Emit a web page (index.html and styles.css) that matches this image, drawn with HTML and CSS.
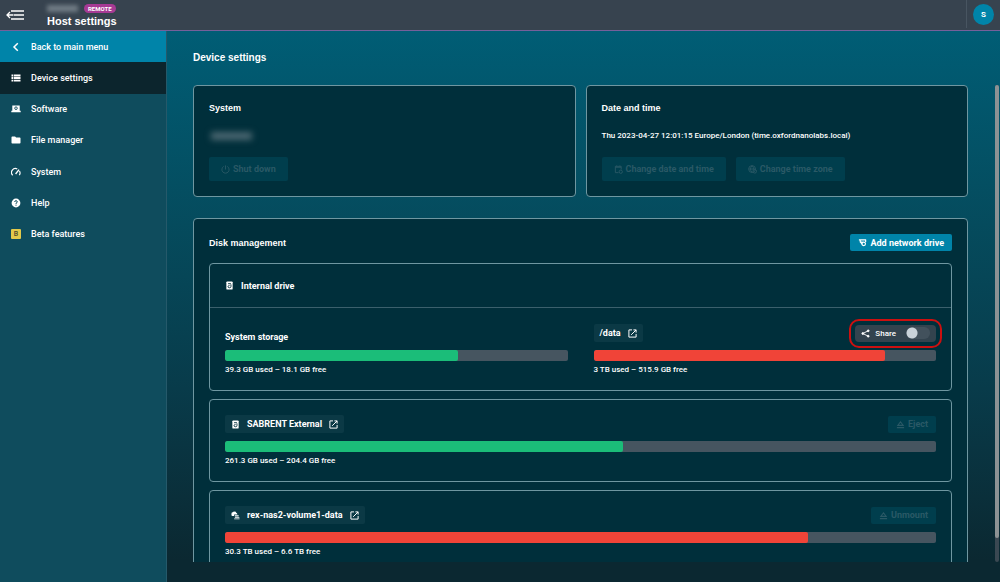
FILE: index.html
```html
<!doctype html>
<html lang="en">
<head>
    <meta charset="utf-8">
    <title>Host settings</title>
    <link rel="stylesheet" href="styles.css">
</head>
<body>
<header class="topbar">
    <button type="button" class="menu-toggle" aria-label="Collapse menu">
        <svg width="18" height="10" viewBox="0 0 18 10" fill="none" stroke="#fff" stroke-width="1.3">
            <path d="M5 1h13M7.500 5H18M5 9h13M7 5H1M4 2L1 5l3 3"/>
        </svg>
    </button>
    <div class="host">
        <div class="host-top">
            <span class="host-name"></span>
            <span class="badge">REMOTE</span>
        </div>
        <h1>Host settings</h1>
    </div>
    <div class="account">
        <button type="button" class="avatar">S</button>
    </div>
</header>

<div class="page">
    <nav class="sidebar">
        <a href="#" class="back">
            <svg class="icon" viewBox="0 0 10 10" fill="none" stroke="#fff" stroke-width="1.5"><path d="M6.800 1.200L3 5l3.800 3.800"/></svg>
            Back to main menu
        </a>
        <a href="#" class="active">
            <svg class="icon" viewBox="0 0 10 10" fill="#fff"><path d="M.5 1.500h1.700v1.900H.5zM2.800 1.500h6.700v1.900H2.800zM.5 4.100h1.700V6H.5zM2.800 4.100h6.700V6H2.800zM.5 6.700h1.700v1.900H.5zM2.800 6.700h6.700v1.900H2.800z"/></svg>
            Device settings
        </a>
        <a href="#">
            <svg class="icon" viewBox="0 0 10 10"><path fill="#fff" d="M1.300 1.500h7.400v5.300h1v1.500H.3V6.800h1z"/><circle cx="5" cy="4.200" r="1.300" fill="none" stroke="#0f4c5d" stroke-width=".9"/></svg>
            Software
        </a>
        <a href="#">
            <svg class="icon" viewBox="0 0 10 10" fill="#fff"><path d="M1.300 1.500h2.800l1 1h3.600q.8 0 .8.800v4.500q0 .8-.8.800H1.300q-.8 0-.8-.8V2.300q0-.8.8-.8z"/></svg>
            File manager
        </a>
        <a href="#">
            <svg class="icon" viewBox="0 0 10 10" fill="none" stroke="#fff" stroke-width="1.200"><path d="M1.700 8.200A3.900 3.900 0 0 1 6.300 2M8.500 4a3.900 3.900 0 0 1-.2 4.200"/><path d="M4.600 7L8 2.600" stroke-width="1.400"/></svg>
            System
        </a>
        <a href="#">
            <svg class="icon" viewBox="0 0 10 10"><circle cx="5" cy="5" r="4.400" fill="#fff"/><path d="M3.700 4q0-1.300 1.300-1.300T6.300 3.900Q6.300 4.600 5 5.300V6M5 6.700v1" fill="none" stroke="#0f4c5d"/></svg>
            Help
        </a>
        <a href="#">
            <span class="beta">B</span>
            Beta features
        </a>
    </nav>

    <main class="main">
        <h2>Device settings</h2>
        <div class="scroll-area">
            <div class="content">
                <div class="card-row">
                    <section class="card">
                        <h3>System</h3>
                        <div class="line"><span class="serial"></span></div>
                        <div class="buttons">
                            <button type="button" class="btn" disabled>
                                <svg viewBox="0 0 10 10" fill="none" stroke="currentColor"><path d="M5 .5V5M3 1.600a4 4 0 1 0 4 0"/></svg>
                                Shut down
                            </button>
                        </div>
                    </section>
                    <section class="card">
                        <h3>Date and time</h3>
                        <div class="line">Thu 2023-04-27 12:01:15 Europe/London (time.oxfordnanolabs.local)</div>
                        <div class="buttons">
                            <button type="button" class="btn" disabled>
                                <svg viewBox="0 0 10 10" fill="none" stroke="currentColor"><path d="M5 8.500H1.500v-7h6.500V5M1.500 2.500H8M3 .5v1M6.500 .5v1"/><circle cx="7.500" cy="7.500" r="1.800"/></svg>
                                Change date and time
                            </button>
                            <button type="button" class="btn" disabled>
                                <svg viewBox="0 0 10 10" fill="none" stroke="currentColor"><circle cx="4.500" cy="4.500" r="3.800"/><path d="M.7 4.500h7.600M4.500 .7Q1 4.500 4.500 8.300M4.500 .7Q6.500 2.500 6 5"/><circle cx="7.500" cy="7" r="2"/></svg>
                                Change time zone
                            </button>
                        </div>
                    </section>
                </div>

                <section class="card disks">
                    <div class="disks-head">
                        <h3>Disk management</h3>
                        <button type="button" class="btn small primary">
                            <svg viewBox="0 0 10 10" fill="none" stroke="currentColor" stroke-width="1.300"><path d="M1 2h8M2.200 4.500H5M8.500 2v2.500M2.500 2v2.500L5 7"/><circle cx="6.300" cy="6.500" r="2"/></svg>
                            Add network drive
                        </button>
                    </div>

                    <div class="drive">
                        <div class="drive-title">
                            <svg class="disk-icon" viewBox="0 0 10 10"><rect x="1.500" y=".5" width="7" height="9" rx="1" fill="#fff"/><path d="M3.400 3h3.200M6.600 3.800v2.400q0 1.300-1.600 1.300T3.400 6.200Q3.400 5 5 5" fill="none" stroke="#002f3b"/></svg>
                            Internal drive
                        </div>
                        <div class="volumes">
                            <div class="volume">
                                <div class="volume-head name-only">System storage</div>
                                <div class="bar"><div class="used green" style="width: 68%"></div></div>
                                <div class="usage">39.3 GB used – 18.1 GB free</div>
                            </div>
                            <div class="volume">
                                <div class="volume-head">
                                    <a href="#" class="chip">
                                        /data
                                        <svg viewBox="0 0 10 10" fill="none" stroke="#fff" stroke-width="1.100"><path d="M4.500 1H1v8h8V5.500M6 1h3v3M9 1L3.500 6.500"/></svg>
                                    </a>
                                    <label class="share">
                                        <svg viewBox="0 0 10 10" fill="#fff" stroke="#fff"><path d="M8 2L2 5l6 3" fill="none"/><circle cx="8" cy="2" r="1"/><circle cx="2" cy="5" r="1"/><circle cx="8" cy="8" r="1"/></svg>
                                        Share
                                        <input type="checkbox" class="switch">
                                    </label>
                                </div>
                                <div class="bar"><div class="used red" style="width: 85%"></div></div>
                                <div class="usage">3 TB used – 515.9 GB free</div>
                            </div>
                        </div>
                    </div>

                    <div class="drive">
                        <div class="volume single">
                            <div class="volume-head">
                                <a href="#" class="chip">
                                    <svg class="disk-icon" viewBox="0 0 10 10"><rect x="1.500" y=".5" width="7" height="9" rx="1" fill="#fff"/><path d="M3.400 3h3.200M6.600 3.800v2.400q0 1.300-1.600 1.300T3.400 6.200Q3.400 5 5 5" fill="none" stroke="#002f3b"/></svg>
                                    SABRENT External
                                    <svg viewBox="0 0 10 10" fill="none" stroke="#fff" stroke-width="1.100"><path d="M4.500 1H1v8h8V5.500M6 1h3v3M9 1L3.500 6.500"/></svg>
                                </a>
                                <button type="button" class="btn small" disabled>
                                    <svg viewBox="0 0 10 10" fill="none" stroke="currentColor" stroke-width="1.200"><path d="M5 2L2 6h6zM1 8.500h8"/></svg>
                                    Eject
                                </button>
                            </div>
                            <div class="bar"><div class="used green" style="width: 56%"></div></div>
                            <div class="usage">261.3 GB used – 204.4 GB free</div>
                        </div>
                    </div>

                    <div class="drive">
                        <div class="volume single">
                            <div class="volume-head">
                                <a href="#" class="chip">
                                    <svg class="disk-icon" viewBox="0 0 10 10" fill="#fff"><path d="M.5 3Q.5 1.500 2 1.500 2.500.5 4 .7 5.300.5 5.800 2 7 2.200 7 3.500V4H3.500v1.500H1.500Q.5 5.500.5 4.500zM4.300 4.800h4.200V6H4.300zM4.300 6.600h5v1H4.300zM3.500 8.200h6v1h-6z"/></svg>
                                    rex-nas2-volume1-data
                                    <svg viewBox="0 0 10 10" fill="none" stroke="#fff" stroke-width="1.100"><path d="M4.500 1H1v8h8V5.500M6 1h3v3M9 1L3.500 6.500"/></svg>
                                </a>
                                <button type="button" class="btn small" disabled>
                                    <svg viewBox="0 0 10 10" fill="none" stroke="currentColor" stroke-width="1.200"><path d="M5 2L2 6h6zM1 8.500h8"/></svg>
                                    Unmount
                                </button>
                            </div>
                            <div class="bar"><div class="used red" style="width: 82%"></div></div>
                            <div class="usage">30.3 TB used – 6.6 TB free</div>
                        </div>
                    </div>
                </section>
            </div>
            <div class="scrollbar"><div class="thumb"></div></div>
        </div>
    </main>
</div>
</body>
</html>
```

FILE: styles.css
```css
* {
    box-sizing: border-box;
}
body {
    margin: 0;
    height: 100vh;
    display: flex;
    flex-direction: column;
    overflow: hidden;
    font-family: Roboto, "Liberation Sans", Arial, sans-serif;
    font-size: 9px;
    font-weight: 500;
    color: #ffffff;
    background-color: #0b2831;
}
h1, h2, h3 {
    margin: 0;
    font-family: "Liberation Sans", Arial, sans-serif;
}
a {
    color: #ffffff;
    text-decoration: none;
}
button {
    font-family: inherit;
    border: 0;
    padding: 0;
    color: #ffffff;
}

/* Top bar */
.topbar {
    display: flex;
    height: 31px;
    flex: none;
    background-color: #37434f;
    border-bottom: 1px solid #75609a;
}
.menu-toggle {
    display: flex;
    align-items: center;
    width: 47px;
    padding-left: 6px;
    background: none;
}
.host {
    flex: 1;
}
.host-top {
    display: flex;
    align-items: center;
    gap: 6px;
    height: 15px;
    padding-top: 2px;
}
.host-name {
    width: 31px;
    height: 7px;
    background-color: #707b84;
    filter: blur(2px);
}
.badge {
    padding: 0 4px;
    line-height: 9px;
    border-radius: 5px;
    background-color: #a63a94;
    font-size: 6px;
    font-weight: bold;
}
h1 {
    font-size: 11px;
    line-height: 13px;
}
.account {
    display: flex;
    align-items: center;
    justify-content: center;
    width: 34px;
    height: 28px;
    border-left: 1px solid #485561;
}
.avatar {
    width: 21px;
    height: 21px;
    border-radius: 50%;
    background-color: #0084a9;
    font-size: 8px;
    font-weight: bold;
}

/* Sidebar */
.page {
    display: flex;
    flex: 1;
    min-height: 0;
}
.sidebar {
    display: grid;
    grid-template-rows: repeat(7, 1fr) 332px;
    width: 167px;
    background-color: #0f4c5d;
    border-right: 1px solid #25596a;
}
.sidebar a {
    display: flex;
    align-items: center;
    gap: 10px;
    padding-left: 11px;
}
.sidebar .back {
    background-color: #0084a9;
}
.sidebar .active {
    background-color: #0c252d;
}
.icon, .beta {
    width: 10px;
    height: 10px;
}
.beta {
    border-radius: 1px;
    background-color: #e3c94a;
    color: #4b4a2c;
    font-size: 7px;
    line-height: 10px;
    text-align: center;
}

/* Main area */
.main {
    flex: 1;
    display: flex;
    flex-direction: column;
    min-width: 0;
    padding: 19px 1px 20px 26px;
    background: linear-gradient(#005d75, #054b5d 35%, #083b4a 65%, #0b2831 96%);
}
h2 {
    font-size: 10px;
    line-height: 15px;
    margin-bottom: 20px;
}
h3 {
    font-size: 9px;
    line-height: 14px;
}
.scroll-area {
    display: flex;
    flex: 1;
    min-height: 0;
    gap: 27px;
}
.content {
    flex: 1;
    overflow: hidden;
}
.scrollbar {
    width: 4px;
    border-radius: 2px;
    background-color: #3a4852;
}
.thumb {
    height: 95%;
    border-radius: 2px;
    background-color: #8c9294;
}
.card {
    padding: 15px;
    border: 1px solid #6f97a1;
    border-radius: 4px;
    background-color: #002f3b;
}
.card-row {
    display: grid;
    grid-template-columns: 1fr 1fr;
    gap: 10px;
    margin-bottom: 21px;
}
.line {
    display: flex;
    align-items: center;
    height: 13px;
    margin: 14px 0 15px;
    font-size: 8px;
}
.serial {
    width: 41px;
    height: 8px;
    margin-left: 2px;
    background-color: #4a6670;
    filter: blur(3px);
}
.buttons {
    display: flex;
    gap: 10px;
}
.btn {
    display: flex;
    align-items: center;
    gap: 3px;
    height: 24px;
    padding: 0 12px;
    border-radius: 2px;
    background-color: #003e4d;
    font-size: 9px;
    font-weight: bold;
}
.btn:disabled {
    color: #2a5966;
}
.btn.small {
    height: 17px;
    padding: 0 8px;
}
.btn.primary {
    background-color: #0084a9;
}
svg {
    flex: none;
}
.btn svg, .chip svg, .share svg {
    width: 9px;
    height: 9px;
}

/* Drives */
.disks-head {
    display: flex;
    align-items: center;
    justify-content: space-between;
    margin-bottom: 12px;
}
.drive {
    margin-bottom: 8px;
    border: 1px solid #6f97a1;
    border-radius: 4px;
}
.drive-title {
    display: flex;
    align-items: center;
    gap: 7px;
    height: 44px;
    padding-left: 15px;
    border-bottom: 1px solid #3b606c;
    font-weight: bold;
}
.disk-icon {
    width: 9px;
    height: 9px;
}
.volumes {
    display: grid;
    grid-template-columns: 1fr 1fr;
    gap: 26px;
    padding: 16px 15px 14px;
}
.single {
    padding: 15px 15px 14px;
}
.volume-head {
    display: flex;
    align-items: center;
    justify-content: space-between;
    height: 18px;
    margin-bottom: 8px;
    font-weight: bold;
}
.name-only {
    align-items: flex-end;
}
.chip {
    display: flex;
    align-items: center;
    gap: 7px;
    height: 18px;
    padding: 0 6px;
    border-radius: 2px;
    background-color: #0b3945;
}
.share {
    display: flex;
    align-items: center;
    gap: 5px;
    height: 17px;
    padding: 0 6px;
    border-radius: 4px;
    background-color: #33434e;
    font-size: 8px;
    font-weight: 500;
    outline: 2px solid #cc1010;
    outline-offset: 4px;
}
.switch {
    appearance: none;
    width: 24px;
    height: 12px;
    margin: 0 0 0 5px;
    border-radius: 6px;
    background: radial-gradient(circle at 6px 6px, #c9d2d9 5px, #42515c 6px);
}
.switch:checked {
    background: radial-gradient(circle at 18px 6px, #ffffff 5px, #0084a9 6px);
}
.bar {
    height: 11px;
    border-radius: 2px;
    background-color: #465560;
    overflow: hidden;
}
.used {
    height: 100%;
    border-radius: 2px;
}
.green {
    background-color: #1bbd79;
}
.red {
    background-color: #f04438;
}
.usage {
    margin-top: 2px;
    font-size: 8px;
    line-height: 13px;
}
```
